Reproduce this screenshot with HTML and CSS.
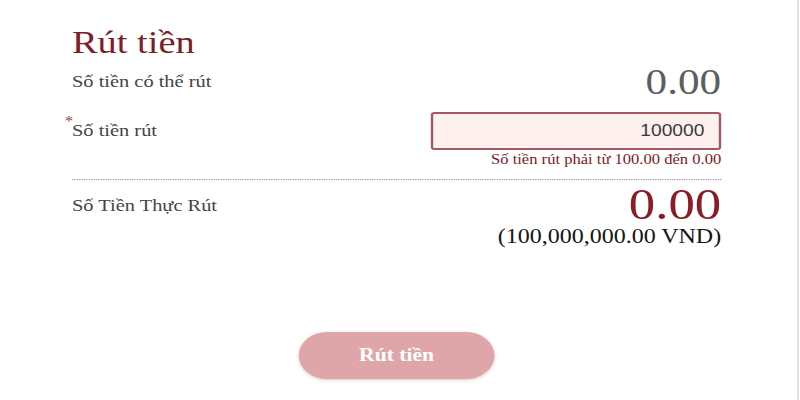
FILE: index.html
```html
<!DOCTYPE html>
<html lang="vi">
<head>
<meta charset="utf-8">
<title>Rút tiền</title>
<link rel="stylesheet" href="styles.css">
</head>
<body>
<div class="page">
  <div class="panel">
    <h1 class="title">Rút tiền</h1>

    <div class="row row-available">
      <span class="label">Số tiền có thể rút</span>
      <span class="amount-gray">0.00</span>
    </div>

    <div class="row row-input">
      <span class="label required">Số tiền rút</span>
      <input class="amount-input" type="text" value="100000">
    </div>
    <div class="error">Số tiền rút phải từ 100.00 đến 0.00</div>

    <div class="divider"></div>

    <div class="row row-actual">
      <span class="label label-actual">Số Tiền Thực Rút</span>
      <div class="actual">
        <div class="amount-red">0.00</div>
        <div class="vnd">(100,000,000.00 VND)</div>
      </div>
    </div>

    <div class="actions">
      <button class="submit" type="button">Rút tiền</button>
    </div>
  </div>
</div>
</body>
</html>
```

FILE: styles.css
```css
* { box-sizing: border-box; }

html, body {
  margin: 0;
  padding: 0;
  background: #ffffff;
}

body {
  font-family: "Liberation Serif", "Times New Roman", serif;
  color: #333;
}

.page {
  width: 799px;
  height: 400px;
  border-right: 2px solid #e2e2e2;
  overflow: hidden;
}

.panel {
  width: 601px;
  padding: 26px 0 0 60px;
  transform: scaleX(1.2);
  transform-origin: 0 0;
  display: flex;
  flex-direction: column;
}

.title {
  margin: 0;
  font-size: 32px;
  line-height: 32px;
  font-weight: normal;
  color: #7b1e2a;
}

.row {
  display: flex;
  justify-content: space-between;
}

.label {
  font-size: 17px;
  color: #454545;
  position: relative;
}

.row-available {
  margin-top: 4px;
  height: 40px;
  line-height: 40px;
  align-items: flex-start;
}

.amount-gray {
  font-size: 36px;
  color: #5e5e5e;
}

.row-input {
  margin-top: 10px;
  height: 38px;
  line-height: 38px;
  align-items: flex-start;
}

.required::before {
  content: "*";
  position: absolute;
  left: -6px;
  top: -9px;
  font-size: 14px;
  color: #9b3a44;
}

.amount-input {
  width: 242px;
  height: 38px;
  border: 2px solid #a5585f;
  border-radius: 3px;
  background: #fff0f0;
  font-family: "Liberation Sans", Arial, sans-serif;
  font-size: 16px;
  color: #3a3a3a;
  text-align: right;
  padding: 0 12px 0 8px;
  outline: none;
}

.error {
  margin-top: 2px;
  text-align: right;
  font-size: 13.8px;
  line-height: 16px;
  color: #7a1a26;
}

.divider {
  margin-top: 11px;
  border-top: 1px dotted #8f8f8f;
  height: 0;
}

.row-actual {
  margin-top: 5px;
  align-items: flex-start;
}

.label-actual {
  line-height: 40px;
  padding-top: 1px;
}

.actual {
  display: flex;
  flex-direction: column;
  align-items: flex-end;
}

.amount-red {
  font-size: 44px;
  line-height: 38px;
  margin-top: 1px;
  color: #8a1c25;
}

.vnd {
  font-size: 20px;
  line-height: 20px;
  margin-top: 2px;
  color: #151515;
}

.actions {
  display: flex;
  justify-content: center;
  margin-top: 86px;
}

.submit {
  width: 163px;
  height: 47px;
  border: none;
  border-radius: 24px;
  background: #dfa6a9;
  color: #ffffff;
  font-family: "Liberation Serif", "Times New Roman", serif;
  font-size: 18px;
  font-weight: bold;
  box-shadow: 0 1px 3px rgba(150, 90, 95, 0.35);
  cursor: pointer;
}
```
